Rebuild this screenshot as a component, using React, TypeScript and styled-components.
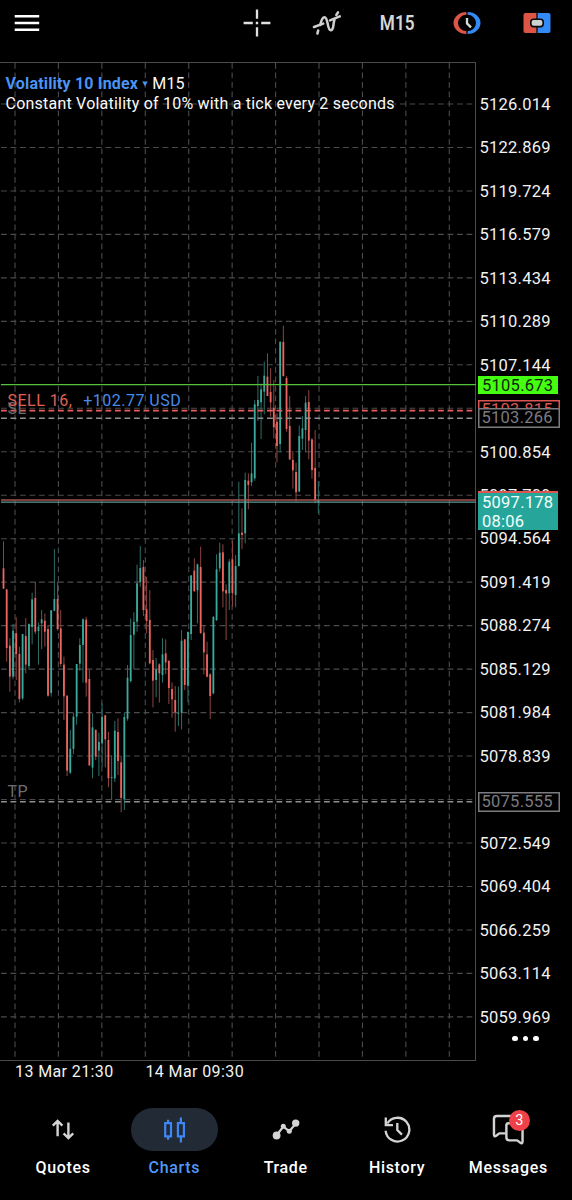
import React from "react";
import styled, { createGlobalStyle, css } from "styled-components";

const GlobalStyle = createGlobalStyle`
  html, body { margin: 0; padding: 0; background: #000; }
  *, *::before, *::after { box-sizing: border-box; }
`;

const PLOT_W = 476;
const PLOT_TOP = 62;
const PLOT_H = 999;
const AXIS_FIRST = 104;
const AXIS_STEP = 43.47;

const Screen = styled.main`
  display: flex;
  flex-direction: column;
  width: 572px;
  height: 1200px;
  overflow: hidden;
  background: #000;
  color: #f2f2f2;
  font-family: Roboto, "Liberation Sans", sans-serif;
`;

const Toolbar = styled.header`
  display: flex;
  align-items: center;
  justify-content: space-between;
  height: ${PLOT_TOP}px;
  padding: 0 0 16px 13px;
`;

const Tools = styled.div`
  display: grid;
  grid-template-columns: repeat(5, 70px);
  align-items: center;
  justify-items: center;
`;

const IconButton = styled.button`
  display: flex;
  align-items: center;
  justify-content: center;
  padding: 0;
  border: 0;
  background: none;
  color: inherit;
`;

const Timeframe = styled.span`
  color: #d6d6d6;
  font-size: 21px;
  font-weight: 600;
  line-height: 28px;
  transform: scaleX(0.82);
`;

const ChartArea = styled.section`
  display: flex;
  height: ${PLOT_H}px;
`;

const Plot = styled.div`
  position: relative;
  width: ${PLOT_W}px;
  border: solid #4a4a50;
  border-width: 1px 1px 1px 0;
`;

const PlotCanvas = styled.svg`
  position: absolute;
  left: 0;
  top: -1px;
  display: block;
`;

const Heading = styled.div`
  position: relative;
  padding: 11px 0 0 5.5px;
  font-size: 16px;
  line-height: 20px;
  letter-spacing: 0.22px;
  white-space: nowrap;
  color: #fafafa;
`;

const HeadingLine = styled.div`
  display: flex;
  align-items: center;
  gap: 4px;
  height: 20px;
`;

const SymbolName = styled.strong`
  color: #4a94f5;
  font-weight: 700;
  letter-spacing: 0.18px;
`;

const LineLabel = styled.span<{ $y: number; $tone: string; $gap?: number }>`
  position: absolute;
  left: 7.5px;
  top: ${(p) => p.$y - PLOT_TOP - 10}px;
  display: flex;
  gap: ${(p) => p.$gap ?? 0}px;
  line-height: 20px;
  font-size: 16px;
  letter-spacing: 0.48px;
  white-space: nowrap;
  color: ${(p) => p.$tone};
`;

const Profit = styled.span`
  color: #4a8bea;
`;

const PriceAxis = styled.aside`
  position: relative;
  flex: 1;
  padding: ${AXIS_FIRST - PLOT_TOP - AXIS_STEP / 2 + 0.3}px 0 0 3.4px;
`;

const PriceLabel = styled.div`
  display: flex;
  align-items: center;
  height: ${AXIS_STEP}px;
  font-size: 16.5px;
  letter-spacing: 0.26px;
`;

const PriceTag = styled.div<{ $top: number; $h: number; $kind: "fill" | "outline"; $bg: string; $fg: string; $wide?: boolean }>`
  position: absolute;
  left: 2px;
  top: ${(p) => p.$top - PLOT_TOP}px;
  width: ${(p) => (p.$wide ? 82 : 80)}px;
  height: ${(p) => p.$h}px;
  padding-left: 4px;
  overflow: hidden;
  font-size: 16.5px;
  line-height: 19px;
  letter-spacing: 0.26px;
  color: ${(p) => p.$fg};
  ${(p) =>
    p.$kind === "fill"
      ? css`background: ${p.$bg};`
      : css`
          background: #000;
          padding-left: 2.5px;
          line-height: 18px;
          border: 1.5px solid ${p.$bg};
          box-shadow: inset 0 0 0 0.5px ${p.$bg};
        `}
`;

const MoreButton = styled.button`
  position: absolute;
  left: 36px;
  top: 973.5px;
  display: flex;
  gap: 5px;
  padding: 0;
  border: 0;
  background: none;
`;

const Dot = styled.i`
  width: 5.6px;
  height: 5.6px;
  border-radius: 50%;
  background: #fff;
`;

const TimeAxis = styled.div`
  display: grid;
  grid-template-columns: 130.4px auto;
  padding: 0 0 0 15px;
  height: 38px;
  line-height: 21px;
  font-size: 16px;
  letter-spacing: 0.4px;
`;

const Nav = styled.nav`
  display: grid;
  grid-template-columns: repeat(5, 111.3px);
  padding: 9px 0 0 7.5px;
`;

const NavItem = styled.a<{ $active?: boolean }>`
  display: flex;
  flex-direction: column;
  align-items: center;
  gap: 7px;
  font-size: 16px;
  font-weight: 500;
  line-height: 20px;
  letter-spacing: 0.68px;
  color: ${(p) => (p.$active ? "#5098f8" : "#fff")};
`;

const NavPill = styled.span<{ $active?: boolean }>`
  position: relative;
  display: flex;
  align-items: center;
  justify-content: center;
  width: 87px;
  height: 43px;
  border-radius: 22px;
  background: ${(p) => (p.$active ? "#222a35" : "transparent")};
  color: ${(p) => (p.$active ? "#3d87f5" : "#d4d4d4")};
`;

const Badge = styled.span`
  position: absolute;
  left: 44px;
  top: 2px;
  width: 21px;
  height: 21px;
  border-radius: 50%;
  background: #ee4248;
  color: #fff;
  font-size: 14.5px;
  font-weight: 400;
  line-height: 22px;
  letter-spacing: 0;
  text-align: center;
`;

type Candle = [number, number, number, number, "u" | "d"];

/* high, body top, body bottom, low (thirds of a pixel below the band's origin) and direction */
const band = (origin: number, rows: Candle[]): Candle[] =>
  rows.map(([h, t, b, l, d]) => [origin + h / 3, origin + t / 3, origin + b / 3, origin + l / 3, d]);

const candles: Candle[] = [
  ...band(530, [
    [34, 115, 176, 176, "d"], [178, 178, 354, 395, "d"], [325, 347, 440, 485, "d"], [282, 302, 440, 448, "u"],
    [262, 310, 372, 450, "d"], [350, 372, 507, 517, "d"], [312, 312, 505, 510, "u"], [264, 318, 404, 430, "d"],
    [280, 282, 408, 420, "u"], [188, 208, 291, 343, "u"], [156, 204, 305, 312, "d"], [278, 290, 303, 404, "u"],
    [240, 268, 280, 357, "u"], [250, 272, 305, 350, "d"], [285, 297, 497, 500, "d"], [240, 241, 489, 500, "u"],
    [57, 207, 242, 244, "u"], [155, 207, 297, 302, "d"], [240, 295, 402, 410, "d"], [380, 404, 499, 570, "d"],
    [496, 497, 722, 738, "d"], [600, 656, 728, 732, "u"], [548, 560, 657, 672, "u"], [402, 402, 560, 584, "u"],
    [325, 345, 401, 422, "u"], [265, 268, 345, 458, "u"], [260, 269, 458, 500, "d"], [420, 447, 706, 708, "d"],
    [550, 592, 713, 745, "u"], [598, 600, 680, 690, "d"], [608, 636, 662, 738, "u"], [520, 560, 640, 710, "u"],
    [555, 556, 628, 712, "d"], [605, 630, 745, 772, "d"], [676, 741, 744, 810, "u"], [573, 602, 745, 756, "u"],
    [565, 606, 693, 735, "d"], [678, 697, 804, 847, "d"], [548, 561, 808, 840, "u"], [405, 443, 566, 572, "u"],
    [265, 315, 453, 458, "u"], [247, 276, 314, 417, "u"], [104, 160, 275, 305, "u"], [48, 114, 156, 170, "u"],
    [90, 111, 240, 258, "d"], [140, 238, 273, 310, "d"], [180, 270, 400, 403, "d"], [360, 390, 452, 532, "d"],
    [384, 418, 450, 502, "u"], [400, 403, 430, 518, "d"], [325, 373, 435, 458, "u"], [328, 370, 397, 432, "d"],
    [390, 393, 474, 522, "d"], [457, 477, 508, 563, "d"], [468, 510, 547, 605, "d"], [470, 548, 551, 588, "u"],
    [300, 332, 548, 598, "u"], [328, 328, 465, 480, "d"], [304, 306, 467, 516, "u"], [136, 136, 312, 330, "u"],
    [85, 122, 183, 186, "d"], [101, 103, 181, 280, "u"], [50, 111, 309, 312, "d"], [285, 308, 367, 433, "d"],
    [335, 373, 440, 442, "d"], [430, 433, 498, 567, "d"], [258, 261, 490, 493, "u"], [73, 118, 270, 273, "u"],
    [38, 68, 115, 125, "u"], [43, 67, 184, 232, "d"], [163, 180, 190, 330, "d"], [87, 95, 190, 240, "u"],
    [32, 88, 190, 230, "d"], [75, 108, 195, 232, "u"],
  ]),
  ...band(480, [
    [5, 160, 258, 260, "u"], [85, 158, 165, 207, "d"], [-22, 0, 160, 190, "u"], [-20, 2, 15, 88, "d"],
  ]),
  ...band(310, [
    [398, 490, 517, 528, "u"], [270, 283, 505, 512, "u"], [198, 270, 288, 333, "u"], [220, 238, 277, 387, "u"],
    [155, 197, 245, 313, "u"], [130, 200, 258, 258, "d"], [175, 246, 277, 320, "d"], [210, 293, 352, 385, "d"],
    [310, 335, 408, 457, "d"], [93, 96, 402, 427, "u"], [47, 96, 198, 200, "d"], [198, 204, 357, 365, "d"],
    [258, 348, 448, 450, "d"], [423, 450, 481, 536, "d"], [458, 486, 547, 575, "d"], [346, 378, 545, 545, "u"],
    [318, 355, 386, 420, "u"], [258, 278, 360, 427, "u"], [240, 276, 392, 448, "d"], [385, 388, 480, 506, "d"],
    [360, 474, 572, 580, "d"], [514, 570, 577, 610, "u"],
  ]),
];

const prices = [
  "5126.014", "5122.869", "5119.724", "5116.579", "5113.434", "5110.289", "5107.144", "5103.999",
  "5100.854", "5097.709", "5094.564", "5091.419", "5088.274", "5085.129", "5081.984", "5078.839",
  "5075.694", "5072.549", "5069.404", "5066.259", "5063.114", "5059.969",
];
const hiddenPrices = new Set(["5103.999", "5075.694"]);
const columns = Array.from({ length: 11 }, (_, i) => 15 + i * 43.43);

const PriceChart = () => (
  <PlotCanvas width={PLOT_W} height={PLOT_H} viewBox={`0 ${PLOT_TOP} ${PLOT_W} ${PLOT_H}`} aria-hidden>
    <g stroke="#4b4b4f" strokeWidth="1.1" strokeDasharray="5.8 3.7">
      {columns.map((x) => (
        <line key={x} x1={x} x2={x} y1={PLOT_TOP + 1} y2={PLOT_TOP + PLOT_H} />
      ))}
      {prices.map((p, i) => (
        <line key={p} x1="1" x2={PLOT_W} y1={AXIS_FIRST + i * AXIS_STEP} y2={AXIS_FIRST + i * AXIS_STEP} />
      ))}
    </g>
    {candles.map(([h, t, b, l, dir], i) => {
      const x = 3.5 + i * 3.18;
      const up = dir === "u";
      return (
        <g key={i}>
          <rect x={x - 0.5} y={h} width="1" height={l - h} fill={up ? "#2c7068" : "#8e4441"} />
          <rect x={x - 0.9} y={t} width="1.8" height={Math.max(b - t, 1)} fill={up ? "#3ba99b" : "#ec6560"} />
        </g>
      );
    })}
    <line x1="1" x2={PLOT_W} y1="384.6" y2="384.6" stroke="#53c43c" strokeWidth="1.3" />
    <g strokeDasharray="5.8 3.7">
      <line x1="1" x2={PLOT_W} y1="410.7" y2="410.7" stroke="#e8605c" strokeWidth="1.8" />
      <line x1="1" x2={PLOT_W} y1="418.2" y2="418.2" stroke="#8f9094" strokeWidth="1.5" />
      <line x1="1" x2={PLOT_W} y1="801.8" y2="801.8" stroke="#8f9094" strokeWidth="1.6" />
    </g>
    <line x1="1" x2={PLOT_W} y1="500" y2="500" stroke="#a85450" strokeWidth="1.3" />
    <line x1="1" x2={PLOT_W} y1="502.2" y2="502.2" stroke="#5d9a96" strokeWidth="1.3" />
  </PlotCanvas>
);

const MenuIcon = () => (
  <svg width="28" height="20" viewBox="0 0 28 20" stroke="#fff" strokeWidth="2.6">
    <path d="M1.7 3.2h24.5M1.7 10h24.5M1.7 16.8h24.5" />
  </svg>
);

const CrosshairIcon = () => (
  <svg width="28" height="28" viewBox="0 0 28 28" stroke="#e0e0e0" strokeWidth="2.3">
    <path d="M14 .6v9.2M14 18.2v9.2M.6 14h9.2M18.2 14h9.2M12.8 14h2.4" />
  </svg>
);

const IndicatorIcon = () => (
  <svg width="30" height="26" viewBox="0 0 30 26" fill="none" stroke="#d0d0d0" strokeWidth="2.5" strokeLinecap="round" strokeLinejoin="round">
    <path d="M2 17L11.2 13.6M18 10.4L27.8 6.4" />
    <path d="M5.4 23.6L6.2 20.4M8.2 15C9.2 10.6 10.2 7.2 12.4 7.2C16.6 7.2 14.8 20.2 18.8 20.2C22 20.2 20.8 15 22.4 10" />
    <path d="M24.3 5L26 2.4" />
  </svg>
);

const ClockIcon = () => (
  <svg width="28" height="24" viewBox="0 0 28 24">
    <path d="M13.4 1A12.9 11 0 0 0 13.4 23V20.2A8.4 8.2 0 0 1 13.4 3.8Z" fill="#dd5546" />
    <path d="M14.6 1A12.9 11 0 0 1 14.6 23V20.2A8.4 8.2 0 0 0 14.6 3.8Z" fill="#348af4" />
    <path d="M14 7v5.4l4 4" fill="none" stroke="#d4dcd6" strokeWidth="2.3" />
  </svg>
);

const TradePanelIcon = () => (
  <svg width="28" height="20" viewBox="0 0 28 20">
    <path d="M2.5 0H13.4V20H2.5Q.5 20 .5 18V2Q.5 0 2.5 0Z" fill="#dd5546" />
    <path d="M14.6 0H25.5Q27.5 0 27.5 2V18Q27.5 20 25.5 20H14.6Z" fill="#348af4" />
    <rect x="7.8" y="6.2" width="12.4" height="7.4" rx="2.8" fill="#ccd2cf" stroke="#080808" strokeWidth="1.6" />
  </svg>
);

const CaretIcon = () => (
  <svg width="6" height="6" viewBox="0 0 6 6" fill="#4a94f5">
    <path d="M.3 .4H5.7L3 5.6Z" />
  </svg>
);

const QuotesIcon = () => (
  <svg width="24" height="22" viewBox="0 0 24 22" fill="none" stroke="currentColor" strokeWidth="2.4">
    <path d="M6.6 17.2V2.6M1.8 6.7L6.6 2L11.4 6.7M17.4 3.6V18.4M12.6 14.3L17.4 19L22.2 14.3" />
  </svg>
);

const CandlesIcon = () => (
  <svg width="24" height="28" viewBox="0 0 24 28" fill="none" stroke="currentColor" strokeWidth="2.2">
    <path d="M3.2 7.2H9V20.4H3.2ZM6.1 3.8V7.2M6.1 20.4V23.8M15.9 7.2H21.9V20.4H15.9ZM18.9 1.4V7.2M18.9 20.4V26.4" />
  </svg>
);

const TradeIcon = () => (
  <svg width="28" height="22" viewBox="0 0 28 22" fill="currentColor">
    <path d="M4.5 16.5L11.3 7.5L17.3 12.4L23.6 4.6" fill="none" stroke="currentColor" strokeWidth="2.2" />
    <circle cx="4.6" cy="16.5" r="3.9" />
    <circle cx="11.3" cy="7.2" r="2.5" />
    <circle cx="17.3" cy="12.2" r="2.5" />
    <circle cx="23.7" cy="4.1" r="3.7" />
  </svg>
);

const HistoryIcon = () => (
  <svg width="29" height="29" viewBox="0 0 30 30" fill="none" stroke="currentColor" strokeWidth="2.4">
    <path d="M2.7 16.3A12.3 12.3 0 1 0 4.4 8.8" />
    <path d="M2.9 2.6V10.4H10.3" />
    <path d="M14.8 8.3V15.6L19.6 20.3" />
  </svg>
);

const MessagesIcon = () => (
  <svg width="33" height="31" viewBox="0 0 34 32" fill="none" stroke="currentColor" strokeWidth="2.5" strokeLinejoin="round">
    <path d="M22 2H5Q2 2 2 5V21Q2 24 4.3 22.5L7.5 20H14" />
    <path d="M17 9.5H28Q31.5 9.5 31.5 13V28Q31.5 31.5 29 29.5L26 27.2H18Q14.8 27.2 14.8 24V12Q14.8 9.5 17 9.5Z" />
  </svg>
);

const navItems = [
  { label: "Quotes", icon: <QuotesIcon /> },
  { label: "Charts", icon: <CandlesIcon />, active: true },
  { label: "Trade", icon: <TradeIcon /> },
  { label: "History", icon: <HistoryIcon /> },
  { label: "Messages", icon: <MessagesIcon />, badge: 3 },
];

export default function App() {
  return (
    <Screen>
      <GlobalStyle />
      <Toolbar>
        <IconButton aria-label="Menu"><MenuIcon /></IconButton>
        <Tools>
          <IconButton aria-label="Crosshair"><CrosshairIcon /></IconButton>
          <IconButton aria-label="Indicators"><IndicatorIcon /></IconButton>
          <Timeframe>M15</Timeframe>
          <IconButton aria-label="Sessions"><ClockIcon /></IconButton>
          <IconButton aria-label="One-click trading"><TradePanelIcon /></IconButton>
        </Tools>
      </Toolbar>
      <ChartArea>
        <Plot>
          <PriceChart />
          <Heading>
            <HeadingLine>
              <SymbolName>Volatility 10 Index</SymbolName>
              <CaretIcon />
              <span>M15</span>
            </HeadingLine>
            <div>Constant Volatility of 10% with a tick every 2 seconds</div>
          </Heading>
          <LineLabel $y={408} $tone="#6d6e72">SL</LineLabel>
          <LineLabel $y={400} $tone="#e0605c" $gap={11}>
            SELL 16, <Profit>+102.77 USD</Profit>
          </LineLabel>
          <LineLabel $y={791} $tone="#6d6e72">TP</LineLabel>
        </Plot>
        <PriceAxis>
          {prices.map((p) => (
            <PriceLabel key={p}>{hiddenPrices.has(p) ? "" : p}</PriceLabel>
          ))}
          <PriceTag $top={375.5} $h={18.5} $kind="fill" $bg="#45ff10" $fg="#102808">5105.673</PriceTag>
          <PriceTag $top={400} $h={20} $kind="outline" $bg="#dc5551" $fg="#dc5551" $wide>5103.815</PriceTag>
          <PriceTag $top={408} $h={20} $kind="outline" $bg="#7c7c80" $fg="#7c7c80" $wide>5103.266</PriceTag>
          <PriceTag $top={491} $h={20} $kind="fill" $bg="#dc5551" $fg="#fff">5097.291</PriceTag>
          <PriceTag $top={492.5} $h={37.5} $kind="fill" $bg="#26a69a" $fg="#f2fffd">
            5097.178
            <br />
            08:06
          </PriceTag>
          <PriceTag $top={791.5} $h={20} $kind="outline" $bg="#7c7c80" $fg="#7c7c80" $wide>5075.555</PriceTag>
          <MoreButton aria-label="More">
            <Dot />
            <Dot />
            <Dot />
          </MoreButton>
        </PriceAxis>
      </ChartArea>
      <TimeAxis>
        <span>13 Mar 21:30</span>
        <span>14 Mar 09:30</span>
      </TimeAxis>
      <Nav>
        {navItems.map((item) => (
          <NavItem key={item.label} $active={item.active}>
            <NavPill $active={item.active}>
              {item.icon}
              {item.badge && <Badge>{item.badge}</Badge>}
            </NavPill>
            {item.label}
          </NavItem>
        ))}
      </Nav>
    </Screen>
  );
}
